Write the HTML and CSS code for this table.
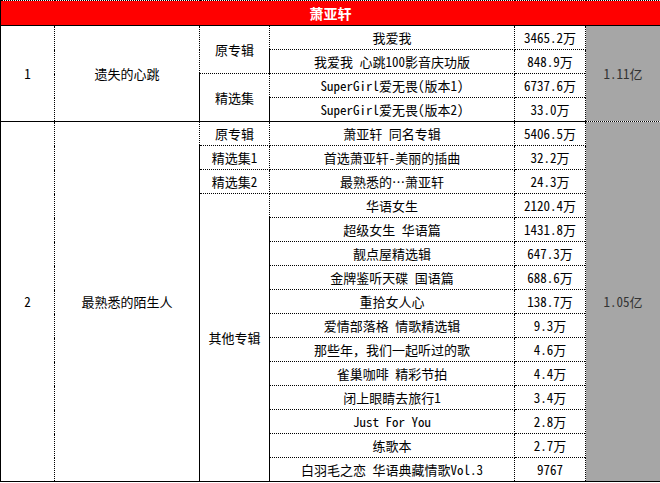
FILE: index.html
```html
<!DOCTYPE html>
<html lang="zh">
<head>
<meta charset="utf-8">
<link rel="stylesheet" href="styles.css">
</head>
<body>
<table class="sheet">
  <colgroup>
    <col class="c-no"><col class="c-song"><col class="c-type"><col class="c-album"><col class="c-num"><col class="c-total">
  </colgroup>
  <tr class="head"><td colspan="6">萧亚轩</td></tr>

  <tr class="grp-start">
    <td rowspan="4">1</td>
    <td rowspan="4">遗失的心跳</td>
    <td rowspan="2">原专辑</td>
    <td>我爱我</td><td>3465.2万</td>
    <td rowspan="4" class="total">1.11亿</td>
  </tr>
  <tr><td>我爱我 心跳100影音庆功版</td><td>848.9万</td></tr>
  <tr><td rowspan="2">精选集</td><td>SuperGirl爱无畏(版本1)</td><td>6737.6万</td></tr>
  <tr><td>SuperGirl爱无畏(版本2)</td><td>33.0万</td></tr>

  <tr class="grp-start">
    <td rowspan="15" class="last">2</td>
    <td rowspan="15" class="last">最熟悉的陌生人</td>
    <td>原专辑</td>
    <td>萧亚轩 同名专辑</td><td>5406.5万</td>
    <td rowspan="15" class="total last">1.05亿</td>
  </tr>
  <tr><td>精选集1</td><td>首选萧亚轩-美丽的插曲</td><td>32.2万</td></tr>
  <tr><td>精选集2</td><td>最熟悉的…萧亚轩</td><td>24.3万</td></tr>
  <tr><td rowspan="12" class="last">其他专辑</td><td>华语女生</td><td>2120.4万</td></tr>
  <tr><td>超级女生 华语篇</td><td>1431.8万</td></tr>
  <tr><td>靓点屋精选辑</td><td>647.3万</td></tr>
  <tr><td>金牌鉴听天碟 国语篇</td><td>688.6万</td></tr>
  <tr><td>重拾女人心</td><td>138.7万</td></tr>
  <tr><td>爱情部落格 情歌精选辑</td><td>9.3万</td></tr>
  <tr><td>那些年，我们一起听过的歌</td><td>4.6万</td></tr>
  <tr><td>雀巢咖啡 精彩节拍</td><td>4.4万</td></tr>
  <tr><td>闭上眼睛去旅行1</td><td>3.4万</td></tr>
  <tr><td>Just For You</td><td>2.8万</td></tr>
  <tr><td>练歌本</td><td>2.7万</td></tr>
  <tr class="last-row"><td class="last">白羽毛之恋 华语典藏情歌Vol.3</td><td class="last">9767</td></tr>
</table>
</body>
</html>
```

FILE: styles.css
```css
html, body {
  margin: 0;
  padding: 0;
  background: #ffffff;
}

.sheet {
  width: 660px;
  table-layout: fixed;
  border-collapse: collapse;
  font-family: "Noto Sans Mono CJK SC", "Noto Sans CJK SC", monospace;
  font-size: 13px;
  color: #000;
}

.c-no { width: 54px; }
.c-song { width: 145px; }
.c-type { width: 70px; }
.c-album { width: 245px; }
.c-num { width: 71px; }
.c-total { width: 75px; }

.sheet td {
  height: 23px;
  padding: 0;
  text-align: center;
  vertical-align: middle;
  border: 1px dotted #000;
  white-space: nowrap;
  overflow: hidden;
  line-height: 16px;
}

.sheet tr > td:first-child { border-left: 1px solid #000; }

.head td {
  height: 24px;
  background: #ff0000;
  color: #fff;
  font-weight: bold;
  font-size: 14px;
  border-top: 1px dotted #000;
  border-bottom: 1px solid #000;
  border-left: 1px solid #000;
  font-family: "Noto Sans CJK SC", sans-serif;
}

.grp-start td { border-top: 1px solid #000; }

.sheet td.total {
  background: #a6a6a6;
  color: #333;
  border-top: none;
  border-left: 1px dotted #000;
  border-right: 1px dotted #000;
}

.sheet td.last { border-bottom: 1px solid #000; }
.sheet td.total.last { border-bottom: 1px solid #000; }
```
